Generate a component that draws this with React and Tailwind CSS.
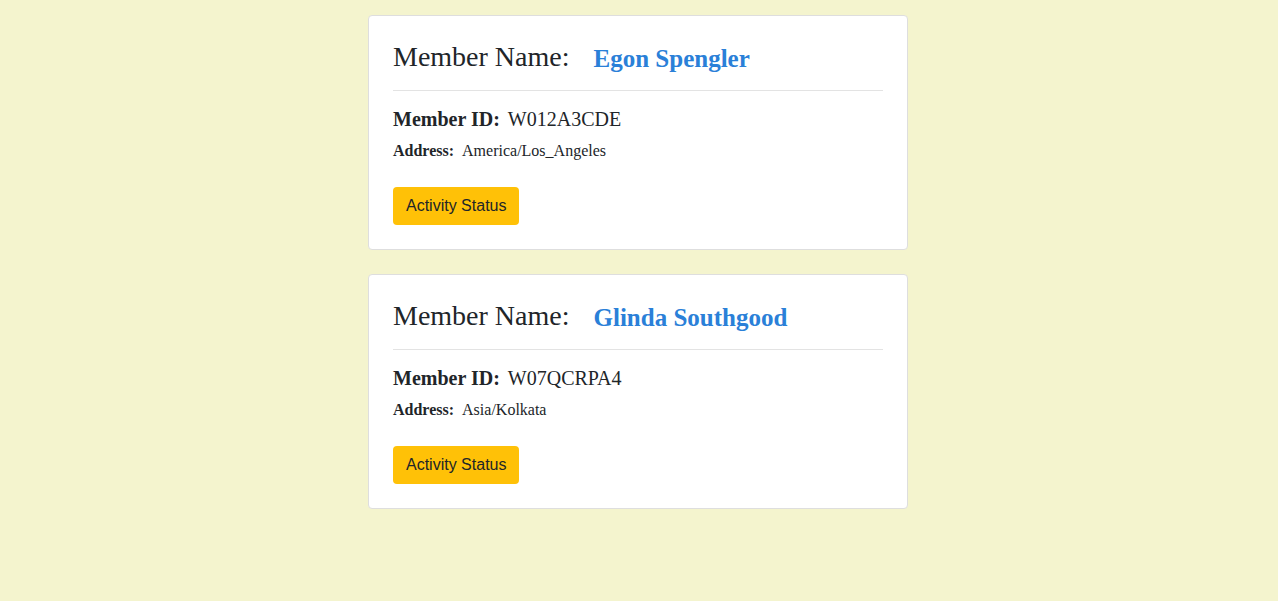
const members = [
  { name: 'Egon Spengler', id: 'W012A3CDE', address: 'America/Los_Angeles' },
  { name: 'Glinda Southgood', id: 'W07QCRPA4', address: 'Asia/Kolkata' },
]

function MemberCard({ member }) {
  return (
    <div className="bg-white border border-[#dedede] rounded-[4px] p-6">
      <div className="flex items-baseline">
        <h3 className="text-[28px] leading-[34px] font-normal text-[#212529]">Member Name:</h3>
        <h4 className="ml-[24px] text-[25px] leading-[1.2] font-bold text-[#2a80d8] relative top-px">{member.name}</h4>
      </div>
      <hr className="mt-4 mb-[13px] border-t border-[#e3e3e3]" />
      <div className="text-[20px] leading-[1.5] text-[#212529]">
        <span className="font-bold">Member ID:</span>
        <span className="ml-2">{member.id}</span>
      </div>
      <div className="mt-[5px] text-[16px] leading-[1.5] text-[#212529]">
        <span className="font-bold">Address:</span>
        <span className="ml-2">{member.address}</span>
      </div>
      <button className="mt-[24px] bg-[#ffc107] text-[#212529] px-[13px] py-[7px] rounded-[4px] text-[16px] leading-6 font-['Liberation_Sans',Arial,sans-serif]">
        Activity Status
      </button>
    </div>
  )
}

export default function App() {
  return (
    <div className="min-h-[601px] bg-[#f4f4ce] pt-[15px] pr-[2px] font-['Liberation_Serif','Times_New_Roman',serif]">
      <div className="w-[540px] mx-auto flex flex-col gap-6">
        {members.map((m, idx) => (
          <MemberCard key={idx} member={m} />
        ))}
      </div>
    </div>
  )
}
